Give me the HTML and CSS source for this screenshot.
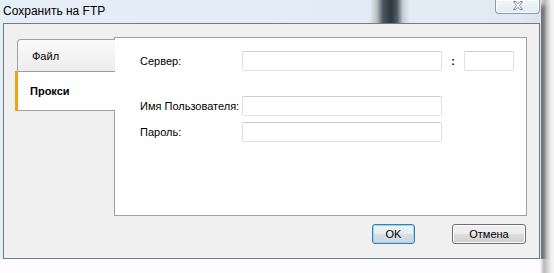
FILE: index.html
```html
<!DOCTYPE html>
<html lang="ru">

<head>
  <meta charset="UTF-8">
  <title>Сохранить на FTP</title>
  <link rel="stylesheet" href="styles.css">
</head>

<body>
  <div class="window">
    <div class="titlebar">
      <span class="title">Сохранить на FTP</span>
      <div class="close-btn">
        <svg width="10" height="9" viewBox="0 0 10 9">
          <path d="M0.5 0.5 H3 L5 2.7 L7 0.5 H9.5 L6.4 4.5 L9.5 8.5 H7 L5 6.3 L3 8.5 H0.5 L3.6 4.5 Z" fill="#fbfcfd" stroke="#7d8896" stroke-width="1" stroke-linejoin="round" />
        </svg>
      </div>
    </div>

    <div class="client">
      <div class="content">
        <div class="tabs">
          <div class="tab">Файл</div>
          <div class="tab active">Прокси</div>
        </div>

        <div class="panel">
          <div class="form-row first">
            <label class="label">Сервер:</label>
            <input class="field" type="text">
            <span class="colon">:</span>
            <input class="field port" type="text">
          </div>
          <div class="form-row second">
            <label class="label">Имя Пользователя:</label>
            <input class="field" type="text">
          </div>
          <div class="form-row">
            <label class="label">Пароль:</label>
            <input class="field" type="password">
          </div>
        </div>
      </div>

      <div class="footer">
        <button class="btn default">OK</button>
        <button class="btn cancel">Отмена</button>
      </div>
    </div>
  </div>
</body>

</html>
```

FILE: styles.css
```css
body {
  margin: 0;
  background: linear-gradient(90deg, #fdfdfd 540px, #b9b9b9 544px, #f4f4f4 552px);
  font-family: 'Liberation Sans', Arial, sans-serif;
  font-size: 11px;
  color: #000;
}

/* Aero glass window */
.window {
  width: 541px;
  height: 259px;
  background: linear-gradient(90deg, #e6eef8 0, #e2ebf6 370px, #b8bfc2 377px, #4b5660 383px, #2c3740 391px, #4f5a63 397px, #c6ced6 403px, #e3ebf5 410px, #e1e9f3 520px, #d9e1ea 100%);
  box-shadow: 3px 5px 5px rgba(0, 0, 0, 0.6);
  display: flex;
  flex-direction: column;
}

.titlebar {
  height: 23px;
  display: flex;
  justify-content: space-between;
  align-items: flex-start;
  flex-shrink: 0;
}

.title {
  font-size: 12px;
  padding: 4px 0 0 3px;
  color: #000;
}

.close-btn {
  width: 45px;
  height: 14px;
  margin-right: 1px;
  border: 1px solid #8e9aa8;
  border-top: none;
  border-radius: 0 0 4px 4px;
  background: linear-gradient(#f2f6fb, #e3eaf3);
  box-shadow: inset 0 0 0 1px rgba(255, 255, 255, 0.7);
  display: flex;
  justify-content: center;
  align-items: flex-start;
  padding-top: 1px;
  box-sizing: border-box;
}

.client {
  flex: 1;
  margin: 0 1px 0 3px;
  border: 1px solid #6f7b87;
  background: #f0f0f0;
  padding: 13px 12px 0 11px;
  display: flex;
  flex-direction: column;
}

.content {
  display: flex;
  height: 179px;
}

/* Side tabs */
.tabs {
  width: 100px;
  margin-right: -1px;
  padding-top: 2px;
  display: flex;
  flex-direction: column;
  position: relative;
  z-index: 1;
}

.tab {
  height: 33px;
  margin-left: 2px;
  border: 1px solid #a0a0a0;
  border-right: none;
  border-radius: 4px 0 0 0;
  background: linear-gradient(#fbfbfb, #ececec);
  padding-left: 14px;
  display: flex;
  align-items: center;
  box-sizing: border-box;
}

.tab.active {
  height: 40px;
  margin-left: 0;
  margin-top: -1px;
  border-radius: 0;
  border-left: 3px solid #f3a10f;
  background: #fff;
  font-weight: bold;
  padding-left: 12px;
}

.panel {
  flex: 1;
  border: 1px solid #a0a0a0;
  background: #fff;
  padding: 13px 0 0 25px;
}

.form-row {
  display: flex;
  align-items: center;
}

.form-row.first {
  margin-bottom: 25px;
}

.form-row.second {
  margin-bottom: 6px;
}

.label {
  width: 102px;
}

.field {
  width: 200px;
  height: 20px;
  margin: 0;
  padding: 0 3px;
  box-sizing: border-box;
  border: 1px solid #dde1e7;
  border-top-color: #c8cdd5;
  border-radius: 2px;
  background: #fff;
  font: inherit;
}

.colon {
  width: 22px;
  text-align: center;
  font-weight: bold;
}

.field.port {
  width: 50px;
}

/* Buttons */
.footer {
  display: flex;
  justify-content: flex-end;
  gap: 37px;
  padding: 8px 1px 0 0;
}

.btn {
  height: 20px;
  margin: 0;
  padding: 0;
  border: 1px solid #707070;
  border-radius: 3px;
  background: linear-gradient(#f2f2f2 0, #ebebeb 50%, #dddddd 51%, #cfcfcf 100%);
  box-shadow: inset 0 0 0 1px #fcfcfc;
  font: inherit;
  color: #000;
}

.btn.default {
  width: 43px;
  border-color: #3c7fb1;
  box-shadow: inset 0 0 0 1px #8fd8f6;
  background: linear-gradient(#f0f4f7 0, #e6ecf0 50%, #d8dfe4 51%, #cdd5db 100%);
}

.btn.cancel {
  width: 74px;
}
```
